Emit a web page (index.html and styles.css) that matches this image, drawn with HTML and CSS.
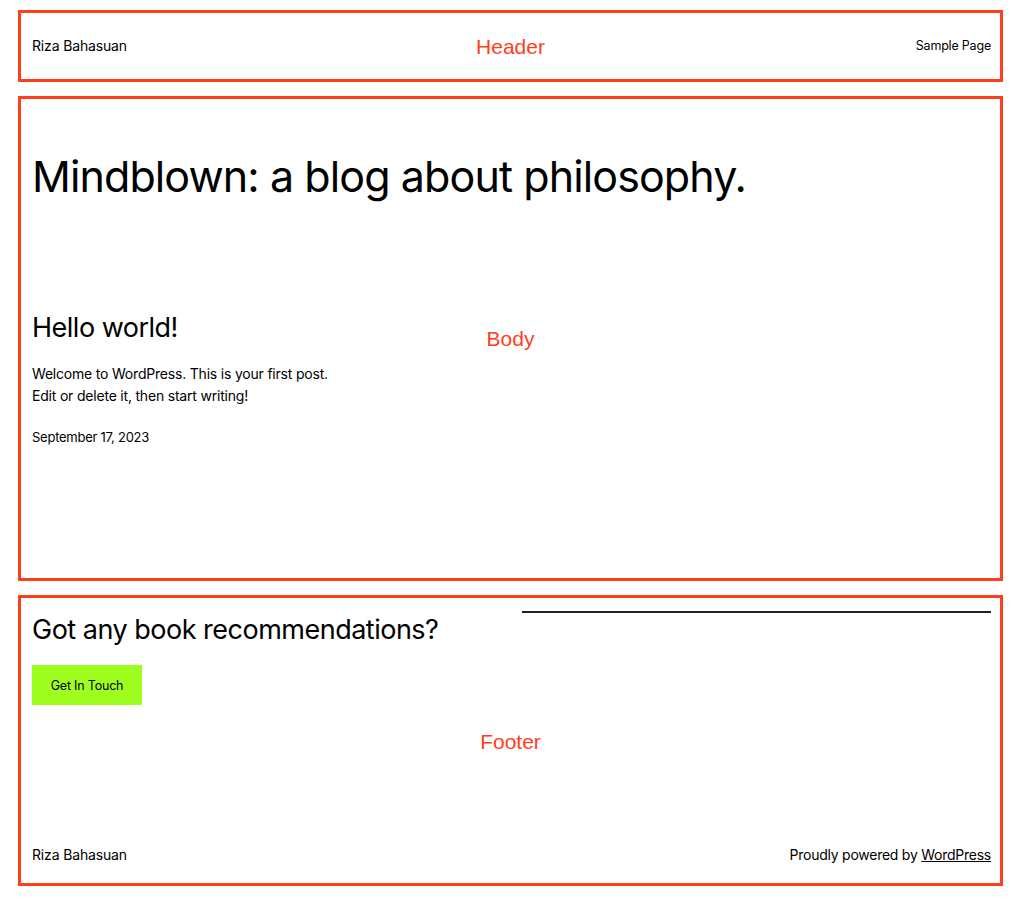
FILE: index.html
```html
<!DOCTYPE html>
<html lang="en">
<head>
<meta charset="utf-8">
<title>Riza Bahasuan</title>
<link rel="stylesheet" href="styles.css">
</head>
<body>
<div class="page">
  <header class="box header">
    <div class="site-title">Riza Bahasuan</div>
    <nav class="nav"><a href="#">Sample Page</a></nav>
    <span class="label label-header">Header</span>
  </header>

  <main class="box main">
    <h1 class="blog-title">Mindblown: a blog about philosophy.</h1>
    <article class="post">
      <h2 class="post-title">Hello world!</h2>
      <p class="excerpt">Welcome to WordPress. This is your first post.<br>Edit or delete it, then start writing!</p>
      <div class="date">September 17, 2023</div>
    </article>
    <span class="label label-body">Body</span>
  </main>

  <footer class="box footer">
    <div class="footer-top">
      <div class="footer-left">
        <h2 class="footer-heading">Got any book recommendations?</h2>
        <a class="button" href="#">Get In Touch</a>
      </div>
      <div class="footer-right"><hr class="sep"></div>
    </div>
    <div class="footer-bottom">
      <div class="site-title">Riza Bahasuan</div>
      <div class="credit">Proudly powered by <a href="#">WordPress</a></div>
    </div>
    <span class="label label-footer">Footer</span>
  </footer>
</div>
</body>
</html>
```

FILE: styles.css
```css
* { box-sizing: border-box; }

html, body {
  margin: 0;
  padding: 0;
  background: #fff;
}

body {
  font-family: Inter, "Noto Sans", "Liberation Sans", sans-serif;
  color: #000;
  font-size: 15px;
}

a { color: #000; }

.page {
  padding: 10px 21px 0 18px;
  display: flex;
  flex-direction: column;
  gap: 14px;
}

.box {
  position: relative;
  border: 3px solid #ff3e1c;
  padding: 0 9px 0 11px;
}

.label {
  position: absolute;
  left: 50%;
  transform: translateX(-50%);
  font-family: "Liberation Sans", Arial, sans-serif;
  font-size: 21px;
  color: #ff3e1c;
  line-height: 1;
  white-space: nowrap;
}

.label-header { top: 23px; }
.label-body { top: 229px; }
.label-footer { top: 133px; }

/* header */
.header {
  height: 72px;
  display: flex;
  align-items: center;
  justify-content: space-between;
}

.site-title {
  font-size: 14px;
  line-height: 20px;
  letter-spacing: -0.15px;
}

.nav {
  padding-bottom: 3px;
}

.nav a {
  font-size: 12.5px;
  letter-spacing: -0.2px;
  text-decoration: none;
}

/* main */
.main {
  height: 485px;
  padding-top: 50px;
}

.blog-title {
  margin: 0;
  font-size: 43px;
  font-weight: 400;
  line-height: 55px;
  letter-spacing: -0.9px;
}

.post {
  margin-top: 107px;
}

.post-title {
  margin: 0;
  font-size: 27px;
  font-weight: 400;
  line-height: 34px;
  letter-spacing: -0.5px;
}

.excerpt {
  margin: 18px 0 0;
  font-size: 14px;
  line-height: 22px;
  letter-spacing: -0.2px;
}

.date {
  margin-top: 21px;
  font-size: 13px;
  line-height: 18px;
  letter-spacing: -0.25px;
}

/* footer */
.footer {
  height: 291px;
  padding-top: 13px;
  padding-bottom: 17px;
  display: flex;
  flex-direction: column;
  justify-content: space-between;
}

.footer-top {
  display: grid;
  grid-template-columns: 1fr 469px;
  gap: 21px;
}

.footer-heading {
  margin: 2px 0 0;
  font-size: 27px;
  font-weight: 400;
  line-height: 34px;
  letter-spacing: -0.5px;
}

.button {
  display: inline-flex;
  align-items: center;
  justify-content: center;
  margin-top: 18px;
  width: 110px;
  height: 40px;
  background: #9eff1f;
  font-size: 12.5px;
  letter-spacing: -0.2px;
  text-decoration: none;
  color: #000;
}

.sep {
  margin: 0;
  border: 0;
  border-top: 2px solid #222;
}

.footer-bottom {
  display: flex;
  justify-content: space-between;
  align-items: center;
  font-size: 14px;
  line-height: 22px;
  letter-spacing: -0.25px;
}

.credit a { text-decoration: underline; }
```
